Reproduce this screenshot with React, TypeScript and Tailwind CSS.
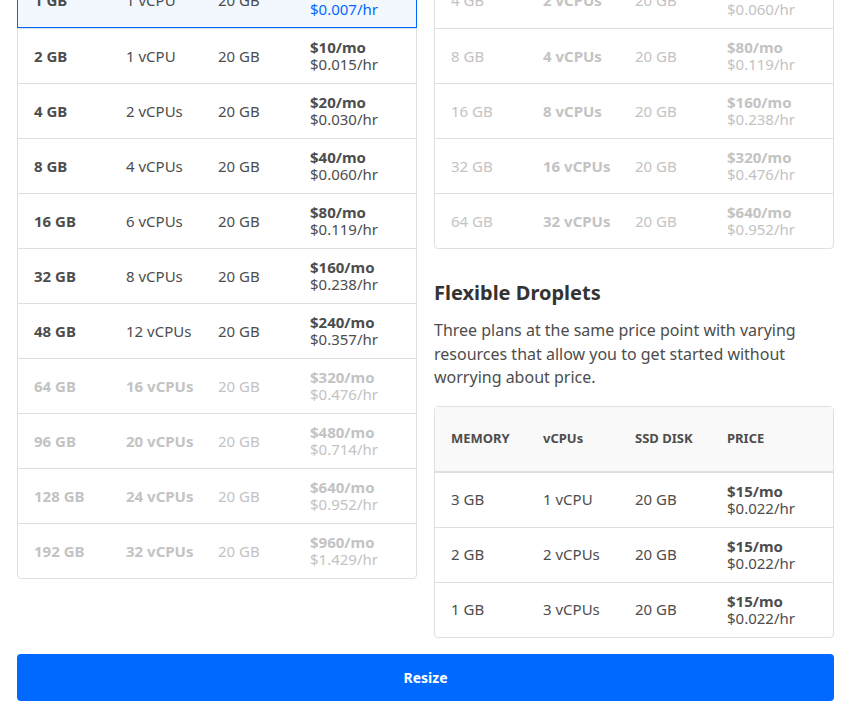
const standard = [
  ['1 GB', '1 vCPU', '$5/mo', '$0.007/hr', 'sel'],
  ['2 GB', '1 vCPU', '$10/mo', '$0.015/hr', ''],
  ['4 GB', '2 vCPUs', '$20/mo', '$0.030/hr', ''],
  ['8 GB', '4 vCPUs', '$40/mo', '$0.060/hr', ''],
  ['16 GB', '6 vCPUs', '$80/mo', '$0.119/hr', ''],
  ['32 GB', '8 vCPUs', '$160/mo', '$0.238/hr', ''],
  ['48 GB', '12 vCPUs', '$240/mo', '$0.357/hr', ''],
  ['64 GB', '16 vCPUs', '$320/mo', '$0.476/hr', 'off'],
  ['96 GB', '20 vCPUs', '$480/mo', '$0.714/hr', 'off'],
  ['128 GB', '24 vCPUs', '$640/mo', '$0.952/hr', 'off'],
  ['192 GB', '32 vCPUs', '$960/mo', '$1.429/hr', 'off'],
]

const optimized = [
  ['4 GB', '2 vCPUs', '$40/mo', '$0.060/hr', 'off'],
  ['8 GB', '4 vCPUs', '$80/mo', '$0.119/hr', 'off'],
  ['16 GB', '8 vCPUs', '$160/mo', '$0.238/hr', 'off'],
  ['32 GB', '16 vCPUs', '$320/mo', '$0.476/hr', 'off'],
  ['64 GB', '32 vCPUs', '$640/mo', '$0.952/hr', 'off'],
]

const flexible = [
  ['3 GB', '1 vCPU', '$15/mo', '$0.022/hr', 'plain'],
  ['2 GB', '2 vCPUs', '$15/mo', '$0.022/hr', 'plain'],
  ['1 GB', '3 vCPUs', '$15/mo', '$0.022/hr', 'plain'],
]

function Row({ row, boldMem = true }: { row: string[]; boldMem?: boolean }) {
  const [mem, cpu, mo, hr, state] = row
  const sel = state === 'sel'
  const off = state === 'off'
  const base = off ? 'text-[#c3c3c3]' : 'text-[#4d4d4d]'
  const price = sel ? 'text-[#0069ff]' : base
  return (
    <div
      className={`grid grid-cols-[92px_92px_92px_1fr] items-center h-[55px] px-4 ${
        sel ? 'bg-[#f3f8ff] border border-[#0069ff] -mx-px' : 'border-t border-[#dfdfdf] first:border-t-0'
      }`}
    >
      <span className={`${base} ${boldMem ? 'font-bold' : ''}`}>{mem}</span>
      <span className={`${base} ${off ? 'font-bold' : ''}`}>{cpu}</span>
      <span className={base}>20 GB</span>
      <div className={`${price} leading-[17px]`}>
        <div className="font-bold">{mo}</div>
        <div>{hr}</div>
      </div>
    </div>
  )
}

export default function App() {
  return (
    <div className="h-[713px] overflow-hidden bg-white px-[17px] text-[15px] font-['Liberation_Sans',Arial,sans-serif]">
      <div className="grid grid-cols-[400px_400px] gap-[17px] -mt-[28px] w-[817px]">
        <div className="self-start border border-[#dfdfdf] rounded-b">
          {standard.map((r) => (
            <Row key={r[0]} row={r} />
          ))}
        </div>
        <div>
          <div className="border border-[#dfdfdf] rounded-b">
            {optimized.map((r) => (
              <Row key={r[0]} row={r} boldMem={false} />
            ))}
          </div>
          <h2 className="mt-[32px] text-[20px] leading-[24px] font-bold text-[#333]">Flexible Droplets</h2>
          <p className="mt-[14px] text-[16px] leading-[23.5px] text-[#4d4d4d]">
            Three plans at the same price point with varying resources that allow you to get started without worrying about price.
          </p>
          <div className="mt-[16px] border border-[#dfdfdf] rounded">
            <div className="grid grid-cols-[92px_92px_92px_1fr] items-center h-[65px] px-4 bg-[#f9f9f9] border-b border-[#dfdfdf] text-[13px] font-bold text-[#4d4d4d]">
              <span>MEMORY</span>
              <span>vCPUs</span>
              <span>SSD DISK</span>
              <span>PRICE</span>
            </div>
            {flexible.map((r) => (
              <Row key={r[0]} row={r} boldMem={false} />
            ))}
          </div>
        </div>
      </div>
      <button className="mt-[16px] w-[817px] h-[47px] rounded bg-[#0069ff] text-white text-[14px] font-bold">
        Resize
      </button>
    </div>
  )
}
